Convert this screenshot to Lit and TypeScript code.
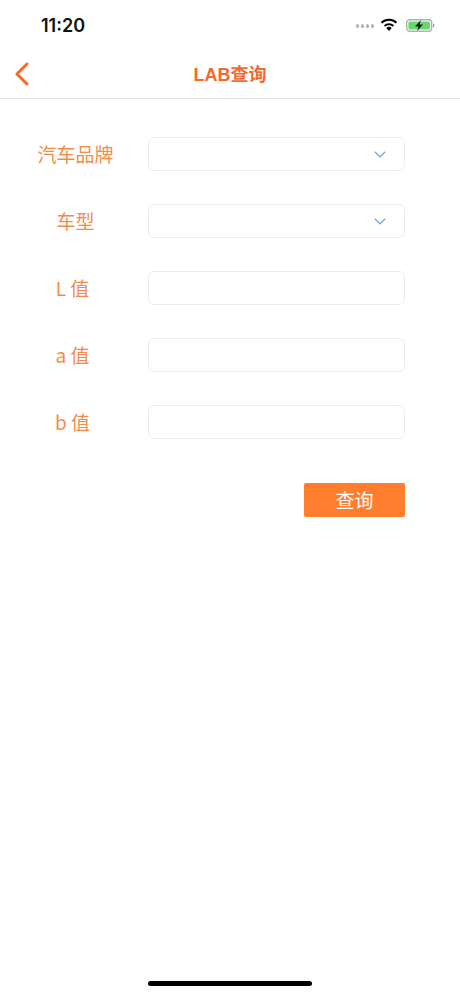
import { LitElement, html, css } from "lit";
import { customElement } from "lit/decorators.js";
import { classMap } from "lit/directives/class-map.js";

const chevron = html`<svg class="chevron" viewBox="0 0 12 7">
  <path d="M0.8 0.8 L6 5.8 L11.2 0.8" fill="none" stroke="#7ba3e0" stroke-width="1.2" />
</svg>`;

const rows = [
  { label: "汽车品牌", select: true, short: false },
  { label: "车型", select: true, short: false },
  { label: "L 值", select: false, short: true },
  { label: "a 值", select: false, short: true },
  { label: "b 值", select: false, short: true },
];

@customElement("app-root")
export class AppRoot extends LitElement {
  protected render() {
    return html`
      <div class="status">
        <span class="time">11:20</span>
        <div class="indicators">
          <div class="dots"><i></i><i></i><i></i><i></i></div>
          <svg class="wifi" viewBox="0 0 18 13">
            <path d="M9 13 L6.3 9.9 A4 4 0 0 1 11.7 9.9 Z" fill="#000" />
            <path d="M4.6 8 A6.4 6.4 0 0 1 13.4 8" fill="none" stroke="#000" stroke-width="2" />
            <path d="M1.5 4.8 A10.8 10.8 0 0 1 16.5 4.8" fill="none" stroke="#000" stroke-width="2" />
          </svg>
          <svg class="battery" viewBox="0 0 29 13">
            <rect x="0.7" y="0.7" width="25" height="11.6" rx="3" fill="none" stroke="#a8b8a8" stroke-width="1.4" />
            <rect x="2.4" y="2.4" width="21.6" height="8.2" rx="1.5" fill="#66d96e" />
            <path d="M27 4.5 C28 4.8 28.4 5.5 28.4 6.5 C28.4 7.5 28 8.2 27 8.5 Z" fill="#a8a8a8" />
            <path d="M15 1 L9 7.4 H12.6 L11 12 L17 5.6 H13.4 Z" fill="#111" />
          </svg>
        </div>
      </div>
      <header class="nav">
        <svg class="back" viewBox="0 0 16 24">
          <path d="M13 2 L3 12 L13 22" fill="none" stroke="#f4692c" stroke-width="3" stroke-linecap="round" stroke-linejoin="round" />
        </svg>
        <span class="title">LAB查询</span>
      </header>
      <form class="form">
        ${rows.map(
          (row) => html`
            <div class="row">
              <div class="label-cell">
                <label class=${classMap({ short: row.short })}>${row.label}</label>
              </div>
              <div class="field">${row.select ? chevron : ""}</div>
            </div>
          `
        )}
        <div class="actions"><button type="button">查询</button></div>
      </form>
      <div class="home"></div>
    `;
  }

  static styles = css`
    :host {
      display: flex;
      flex-direction: column;
      height: 996px;
      background: #fff;
      font-family: "Liberation Sans", "Noto Sans CJK SC", sans-serif;
      overflow: hidden;
    }

    .status {
      height: 50px;
      display: flex;
      align-items: center;
      justify-content: space-between;
      padding: 0 25px 0 41px;
      flex: none;
    }

    .time {
      font-family: Inter, sans-serif;
      font-size: 18px;
      font-weight: 600;
      color: #111;
      margin-top: 1px;
    }

    .indicators {
      display: flex;
      align-items: center;
      gap: 6px;
    }

    .dots {
      display: flex;
      gap: 1.5px;
      margin-top: 2px;
    }

    .dots i {
      width: 3.5px;
      height: 3.5px;
      border-radius: 50%;
      background: #b4b4b4;
    }

    .wifi {
      width: 18px;
      height: 13px;
      margin-top: -1px;
    }

    .battery {
      width: 29px;
      height: 13px;
      margin-left: 2px;
      margin-top: 1px;
    }

    .nav {
      height: 48px;
      flex: none;
      display: flex;
      align-items: center;
      justify-content: center;
      position: relative;
      border-bottom: 1px solid #e2e2e2;
    }

    .back {
      position: absolute;
      left: 14px;
      top: 12px;
      width: 16px;
      height: 24px;
    }

    .title {
      font-size: 18px;
      font-weight: 700;
      color: #f4692c;
      margin-top: -2px;
    }

    .form {
      display: flex;
      flex-direction: column;
      gap: 33px;
      padding: 38px 55px 0 0;
    }

    .row {
      display: flex;
      align-items: center;
      height: 34px;
    }

    .label-cell {
      width: 148px;
      padding: 0 0 0 3px;
      box-sizing: border-box;
      text-align: center;
    }

    label {
      display: inline-block;
      font-family: "Noto Sans CJK SC", sans-serif;
      font-size: 19px;
      line-height: 24px;
      color: #f68a48;
    }

    label.short {
      margin-right: 6px;
    }

    .field {
      flex: 1;
      height: 100%;
      box-sizing: border-box;
      border: 1px solid #ececec;
      border-radius: 6px;
      display: flex;
      align-items: center;
      justify-content: flex-end;
      padding-right: 18px;
    }

    .chevron {
      width: 12px;
      height: 7px;
    }

    .actions {
      display: flex;
      justify-content: flex-end;
      margin-top: 11px;
    }

    button {
      width: 101px;
      height: 34px;
      border: none;
      border-radius: 2px;
      background: #ff7d2c;
      color: #fff;
      font-family: "Noto Sans CJK SC", sans-serif;
      font-size: 19px;
      padding: 0 0 2px;
    }

    .home {
      position: absolute;
      left: 148px;
      top: 981px;
      width: 164px;
      height: 5px;
      border-radius: 3px;
      background: #000;
    }
  `;
}

declare global {
  interface HTMLElementTagNameMap {
    "app-root": AppRoot;
  }
}
